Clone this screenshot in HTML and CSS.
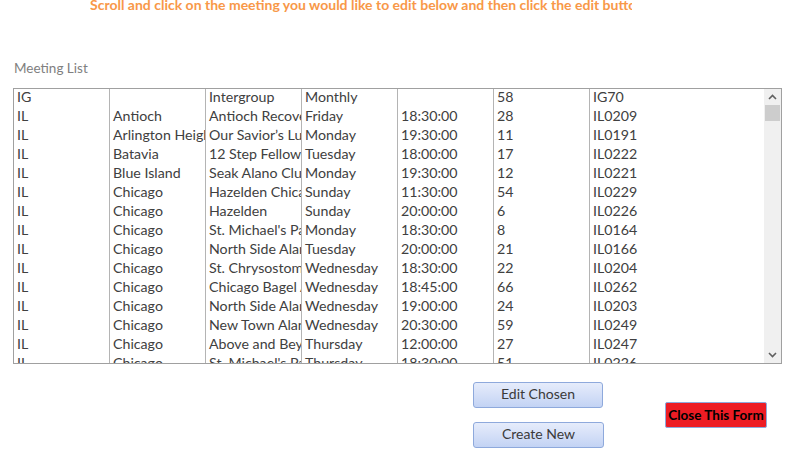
FILE: index.html
```html
<!DOCTYPE html>
<html>
<head>
<meta charset="utf-8">
<link rel="stylesheet" href="styles.css">
</head>
<body>
<div class="page">
  <div class="title">Scroll and click on the meeting you would like to edit below and then click the edit button</div>
  <div class="label">Meeting List</div>
  <div class="listbox">
    <div class="rows">
      <div class="row"><span>IG</span><span></span><span>Intergroup</span><span>Monthly</span><span></span><span>58</span><span>IG70</span></div>
      <div class="row"><span>IL</span><span>Antioch</span><span>Antioch Recovery Group</span><span>Friday</span><span>18:30:00</span><span>28</span><span>IL0209</span></div>
      <div class="row"><span>IL</span><span>Arlington Heights</span><span>Our Savior’s Lutheran</span><span>Monday</span><span>19:30:00</span><span>11</span><span>IL0191</span></div>
      <div class="row"><span>IL</span><span>Batavia</span><span>12 Step Fellowship</span><span>Tuesday</span><span>18:00:00</span><span>17</span><span>IL0222</span></div>
      <div class="row"><span>IL</span><span>Blue Island</span><span>Seak Alano Club</span><span>Monday</span><span>19:30:00</span><span>12</span><span>IL0221</span></div>
      <div class="row"><span>IL</span><span>Chicago</span><span>Hazelden Chicago</span><span>Sunday</span><span>11:30:00</span><span>54</span><span>IL0229</span></div>
      <div class="row"><span>IL</span><span>Chicago</span><span>Hazelden</span><span>Sunday</span><span>20:00:00</span><span>6</span><span>IL0226</span></div>
      <div class="row"><span>IL</span><span>Chicago</span><span>St. Michael's Parish</span><span>Monday</span><span>18:30:00</span><span>8</span><span>IL0164</span></div>
      <div class="row"><span>IL</span><span>Chicago</span><span>North Side Alano</span><span>Tuesday</span><span>20:00:00</span><span>21</span><span>IL0166</span></div>
      <div class="row"><span>IL</span><span>Chicago</span><span>St. Chrysostom's</span><span>Wednesday</span><span>18:30:00</span><span>22</span><span>IL0204</span></div>
      <div class="row"><span>IL</span><span>Chicago</span><span>Chicago Bagel Authority</span><span>Wednesday</span><span>18:45:00</span><span>66</span><span>IL0262</span></div>
      <div class="row"><span>IL</span><span>Chicago</span><span>North Side Alano</span><span>Wednesday</span><span>19:00:00</span><span>24</span><span>IL0203</span></div>
      <div class="row"><span>IL</span><span>Chicago</span><span>New Town Alano</span><span>Wednesday</span><span>20:30:00</span><span>59</span><span>IL0249</span></div>
      <div class="row"><span>IL</span><span>Chicago</span><span>Above and Beyond</span><span>Thursday</span><span>12:00:00</span><span>27</span><span>IL0247</span></div>
      <div class="row"><span>IL</span><span>Chicago</span><span>St. Michael's Parish</span><span>Thursday</span><span>18:30:00</span><span>51</span><span>IL0226</span></div>
    </div>
    <div class="scrollbar">
      <div class="arrow"><svg width="9" height="6" viewBox="0 0 9 6"><path d="M1 5 L4.5 1.5 L8 5" fill="none" stroke="#606060" stroke-width="1.6"/></svg></div>
      <div class="thumb"></div>
      <div class="track"></div>
      <div class="arrow"><svg width="9" height="6" viewBox="0 0 9 6"><path d="M1 1 L4.5 4.5 L8 1" fill="none" stroke="#606060" stroke-width="1.6"/></svg></div>
    </div>
  </div>
  <div class="actions">
    <div class="stack">
      <button class="btn">Edit Chosen</button>
      <button class="btn wide">Create New</button>
    </div>
    <button class="close">Close This Form</button>
  </div>
</div>
</body>
</html>
```
FILE: styles.css
```css
html, body {
  margin: 0;
  padding: 0;
  background: #ffffff;
}
.page {
  font-family: Lato, "Open Sans", sans-serif;
  width: 794px;
  height: 464px;
  overflow: hidden;
}
.title {
  margin-left: 90px;
  width: 542px;
  overflow: hidden;
  white-space: nowrap;
  color: #f89848;
  font-weight: bold;
  font-size: 14px;
  line-height: 10px;
  height: 12px;
}
.label {
  margin: 48px 0 0 14px;
  color: #808080;
  font-size: 13.5px;
  line-height: 16px;
  height: 16px;
}
.listbox {
  margin-left: 13px;
  margin-top: 12px;
  width: 767px;
  height: 274px;
  border: 1px solid #a0a0a0;
  display: flex;
}
.rows {
  flex: 1;
  overflow: hidden;
}
.row {
  display: grid;
  grid-template-columns: 96px 96px 96px 96px 96px 96px 1fr;
  height: 19px;
  color: #404040;
  font-size: 14.2px;
  line-height: 15px;
}
.row span {
  white-space: nowrap;
  overflow: hidden;
  padding-left: 3px;
  border-right: 1px solid #b4b4b4;
}
.row span:last-child {
  border-right: none;
}
.scrollbar {
  width: 17px;
  background: #f0f0f0;
  display: flex;
  flex-direction: column;
}
.arrow {
  height: 16px;
  display: flex;
  align-items: center;
  justify-content: center;
}
.thumb {
  height: 16px;
  margin: 0 1px;
  background: #cdcdcd;
}
.track {
  flex: 1;
}
.actions {
  display: flex;
  margin-top: 18px;
  margin-left: 473px;
}
.stack {
  display: flex;
  flex-direction: column;
  gap: 14px;
}
.btn {
  width: 130px;
  height: 26px;
  border: 1px solid #8ea9dc;
  border-radius: 3px;
  background: linear-gradient(#e6ecfb, #c3d3f4);
  color: #3a3a3a;
  font-family: Lato, "Open Sans", sans-serif;
  font-size: 14px;
  line-height: 20px;
  padding: 0 0 2px;
}
.btn.wide {
  width: 131px;
}
.close {
  align-self: center;
  margin-left: 61px;
  width: 102px;
  height: 26px;
  border: 1px solid #8ea9dc;
  border-radius: 2px;
  background: #ed1c24;
  color: #000000;
  font-family: Lato, "Open Sans", sans-serif;
  font-weight: bold;
  font-size: 13.5px;
  padding: 0;
}
```
